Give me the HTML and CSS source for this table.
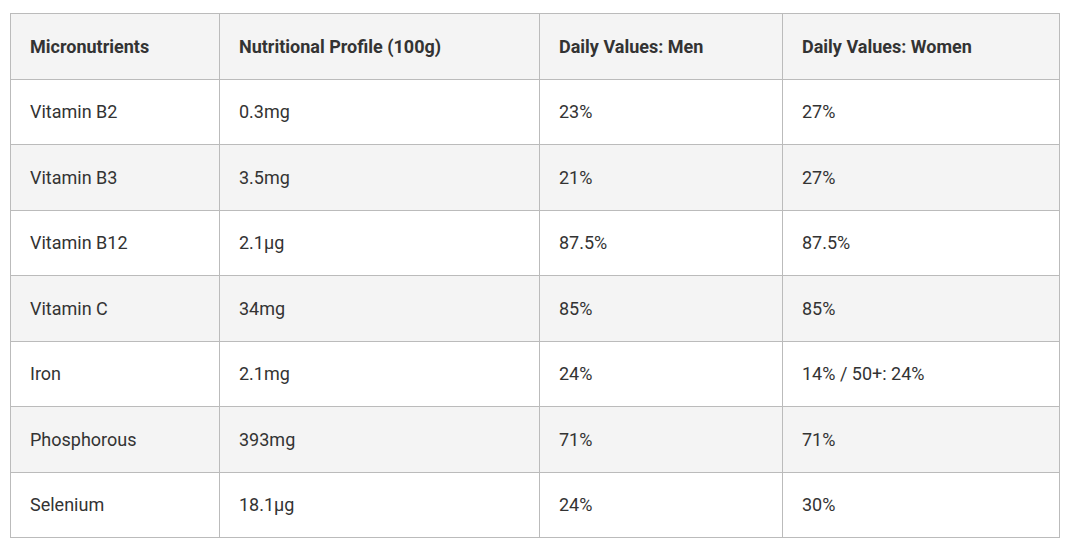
FILE: index.html
```html
<!DOCTYPE html>
<html>
<head>
<meta charset="utf-8">
<link rel="stylesheet" href="styles.css">
</head>
<body>
<div class="wrap">
<table class="nutri">
  <colgroup>
    <col class="c1"><col class="c2"><col class="c3"><col class="c4">
  </colgroup>
  <thead>
    <tr><th>Micronutrients</th><th>Nutritional Profile (100g)</th><th>Daily Values: Men</th><th>Daily Values: Women</th></tr>
  </thead>
  <tbody>
    <tr><td>Vitamin B2</td><td>0.3mg</td><td>23%</td><td>27%</td></tr>
    <tr><td>Vitamin B3</td><td>3.5mg</td><td>21%</td><td>27%</td></tr>
    <tr><td>Vitamin B12</td><td>2.1µg</td><td>87.5%</td><td>87.5%</td></tr>
    <tr><td>Vitamin C</td><td>34mg</td><td>85%</td><td>85%</td></tr>
    <tr><td>Iron</td><td>2.1mg</td><td>24%</td><td>14% / 50+: 24%</td></tr>
    <tr><td>Phosphorous</td><td>393mg</td><td>71%</td><td>71%</td></tr>
    <tr><td>Selenium</td><td>18.1µg</td><td>24%</td><td>30%</td></tr>
  </tbody>
</table>
</div>
</body>
</html>
```
FILE: styles.css
```css
html, body { margin: 0; padding: 0; background: #fff; }
.wrap { padding: 13px 0 0 10px; }
.nutri {
  border-collapse: collapse;
  width: 1049px;
  table-layout: fixed;
  font-family: Roboto, "Liberation Sans", sans-serif;
  font-size: 18px;
  color: #333;
}
.c1 { width: 209px; }
.c2 { width: 320px; }
.c3 { width: 243px; }
.c4 { width: 277px; }
.nutri th, .nutri td {
  border: 1px solid #bbb;
  padding: 0 19px;
  height: 64.5px;
  text-align: left;
  vertical-align: middle;
  box-sizing: border-box;
}
.nutri th { font-weight: 700; background: #f4f4f4; }
.nutri tr { height: 65.5px; }
.nutri tbody tr:nth-child(even) td { background: #f4f4f4; }
```
